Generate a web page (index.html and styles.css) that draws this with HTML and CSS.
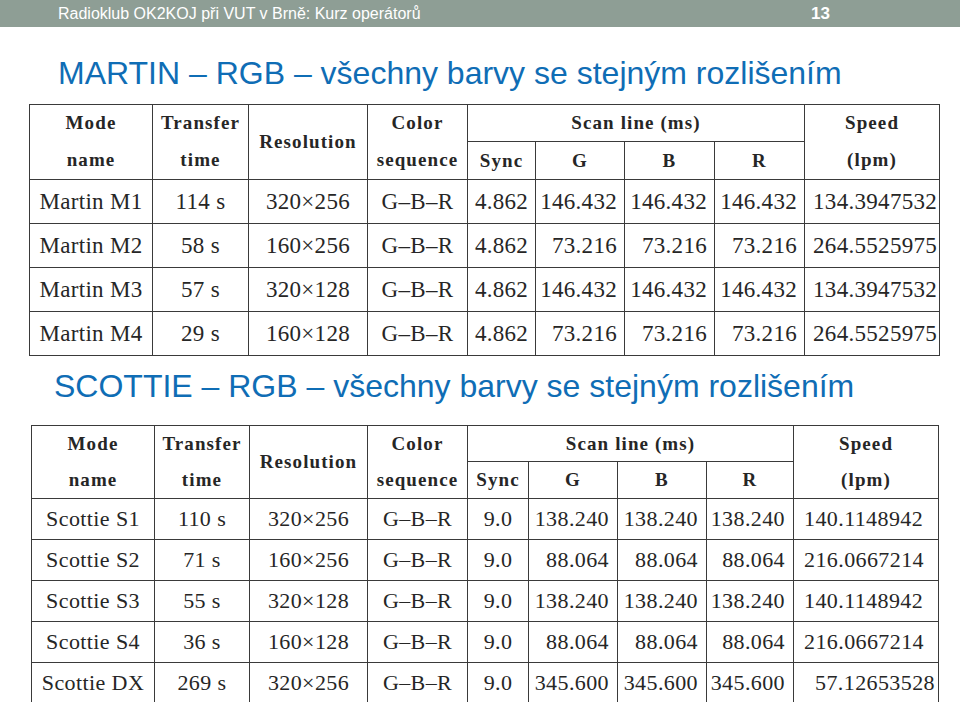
FILE: index.html
```html
<!DOCTYPE html>
<html lang="cs">
<head>
<meta charset="utf-8">
<title>MARTIN a SCOTTIE – RGB</title>
<link rel="stylesheet" href="styles.css">
</head>
<body>
<header class="bar">
  <span class="club">Radioklub OK2KOJ při VUT v Brně: Kurz operátorů</span>
  <span class="num">13</span>
</header>

<h1 class="title t1">MARTIN – RGB – všechny barvy se stejným rozlišením</h1>
<table class="modes martin">
  <colgroup>
    <col class="c1"><col class="c2"><col class="c3"><col class="c4"><col class="c5"><col class="c6"><col class="c7"><col class="c8"><col class="c9">
  </colgroup>
  <thead>
    <tr class="h1">
      <th class="top">Mode</th>
      <th class="top">Transfer</th>
      <th rowspan="2">Resolution</th>
      <th class="top">Color</th>
      <th colspan="4">Scan line (ms)</th>
      <th class="top">Speed</th>
    </tr>
    <tr class="h2">
      <th class="bot">name</th>
      <th class="bot">time</th>
      <th class="bot">sequence</th>
      <th>Sync</th>
      <th>G</th>
      <th>B</th>
      <th>R</th>
      <th class="bot">(lpm)</th>
    </tr>
  </thead>
  <tbody>
    <tr><td>Martin M1</td><td>114 s</td><td>320×256</td><td>G–B–R</td><td>4.862</td><td class="num">146.432</td><td class="num">146.432</td><td class="num">146.432</td><td class="spd">134.3947532</td></tr>
    <tr><td>Martin M2</td><td>58 s</td><td>160×256</td><td>G–B–R</td><td>4.862</td><td class="num">73.216</td><td class="num">73.216</td><td class="num">73.216</td><td class="spd">264.5525975</td></tr>
    <tr><td>Martin M3</td><td>57 s</td><td>320×128</td><td>G–B–R</td><td>4.862</td><td class="num">146.432</td><td class="num">146.432</td><td class="num">146.432</td><td class="spd">134.3947532</td></tr>
    <tr><td>Martin M4</td><td>29 s</td><td>160×128</td><td>G–B–R</td><td>4.862</td><td class="num">73.216</td><td class="num">73.216</td><td class="num">73.216</td><td class="spd">264.5525975</td></tr>
  </tbody>
</table>

<h1 class="title t2">SCOTTIE – RGB – všechny barvy se stejným rozlišením</h1>
<table class="modes scottie">
  <colgroup>
    <col class="c1"><col class="c2"><col class="c3"><col class="c4"><col class="c5"><col class="c6"><col class="c7"><col class="c8"><col class="c9">
  </colgroup>
  <thead>
    <tr class="h1">
      <th class="top">Mode</th>
      <th class="top">Transfer</th>
      <th rowspan="2">Resolution</th>
      <th class="top">Color</th>
      <th colspan="4">Scan line (ms)</th>
      <th class="top">Speed</th>
    </tr>
    <tr class="h2">
      <th class="bot">name</th>
      <th class="bot">time</th>
      <th class="bot">sequence</th>
      <th>Sync</th>
      <th>G</th>
      <th>B</th>
      <th>R</th>
      <th class="bot">(lpm)</th>
    </tr>
  </thead>
  <tbody>
    <tr><td>Scottie S1</td><td>110 s</td><td>320×256</td><td>G–B–R</td><td>9.0</td><td class="num">138.240</td><td class="num">138.240</td><td class="num">138.240</td><td class="spd">140.1148942</td></tr>
    <tr><td>Scottie S2</td><td>71 s</td><td>160×256</td><td>G–B–R</td><td>9.0</td><td class="num">88.064</td><td class="num">88.064</td><td class="num">88.064</td><td class="spd">216.0667214</td></tr>
    <tr><td>Scottie S3</td><td>55 s</td><td>320×128</td><td>G–B–R</td><td>9.0</td><td class="num">138.240</td><td class="num">138.240</td><td class="num">138.240</td><td class="spd">140.1148942</td></tr>
    <tr><td>Scottie S4</td><td>36 s</td><td>160×128</td><td>G–B–R</td><td>9.0</td><td class="num">88.064</td><td class="num">88.064</td><td class="num">88.064</td><td class="spd">216.0667214</td></tr>
    <tr><td>Scottie DX</td><td>269 s</td><td>320×256</td><td>G–B–R</td><td>9.0</td><td class="num">345.600</td><td class="num">345.600</td><td class="num">345.600</td><td class="spd short">57.12653528</td></tr>
  </tbody>
</table>
</body>
</html>
```

FILE: styles.css
```css
html, body {
  margin: 0;
  padding: 0;
  background: #ffffff;
}

body {
  width: 960px;
  height: 702px;
  overflow: hidden;
  font-family: "Liberation Sans", Arial, sans-serif;
}

.bar {
  height: 27px;
  background: #8e9e95;
  color: #ffffff;
  display: flex;
  align-items: center;
  justify-content: space-between;
  padding: 0 130px 0 58px;
  box-sizing: border-box;
}

.bar .club {
  font-size: 16px;
}

.bar .num {
  font-size: 17px;
  font-weight: bold;
}

.title {
  margin: 0;
  font-weight: normal;
  font-size: 32px;
  line-height: 32px;
  color: #0f6db5;
  white-space: nowrap;
}

.t1 {
  margin: 30px 0 15px 58px;
}

.t2 {
  margin: 14px 0 23px 54px;
}

.modes {
  border-collapse: collapse;
  table-layout: fixed;
  font-family: "Liberation Serif", "Times New Roman", serif;
  color: #262626;
}

.modes th,
.modes td {
  border: 1px solid #3a3a3a;
  padding: 0;
  text-align: center;
  white-space: nowrap;
  overflow: hidden;
}

.modes th {
  font-weight: bold;
  font-size: 19px;
  letter-spacing: 1.1px;
}

.modes th.top {
  border-bottom: none;
}

.modes th.bot {
  border-top: none;
}

.modes td.num {
  text-align: right;
}

.modes td.spd {
  text-align: left;
}

/* MARTIN table */
.martin {
  margin-left: 29px;
  width: 910px;
}

.martin .c1 { width: 123px; }
.martin .c2 { width: 96px; }
.martin .c3 { width: 119px; }
.martin .c4 { width: 100px; }
.martin .c5 { width: 68px; }
.martin .c6 { width: 89px; }
.martin .c7 { width: 90px; }
.martin .c8 { width: 90px; }
.martin .c9 { width: 135px; }

.martin .h1 { height: 37px; }
.martin .h2 { height: 38px; }
.martin tbody tr { height: 44px; }

.martin td {
  font-size: 23px;
  letter-spacing: 0.3px;
}

.martin td.num { padding-right: 7px; }
.martin td.spd { padding-left: 8px; }

/* SCOTTIE table */
.scottie {
  margin-left: 31px;
  width: 907px;
}

.scottie .c1 { width: 123px; }
.scottie .c2 { width: 95px; }
.scottie .c3 { width: 118px; }
.scottie .c4 { width: 100px; }
.scottie .c5 { width: 61px; }
.scottie .c6 { width: 89px; }
.scottie .c7 { width: 89px; }
.scottie .c8 { width: 87px; }
.scottie .c9 { width: 145px; }

.scottie .h1 { height: 36px; }
.scottie .h2 { height: 37px; }
.scottie tbody tr { height: 41px; }

.scottie td {
  font-size: 22px;
  letter-spacing: 0.4px;
}

.scottie td.num { padding-right: 8px; }
.scottie td.spd { padding-left: 10px; }
.scottie td.spd.short { padding-left: 21px; }
```
